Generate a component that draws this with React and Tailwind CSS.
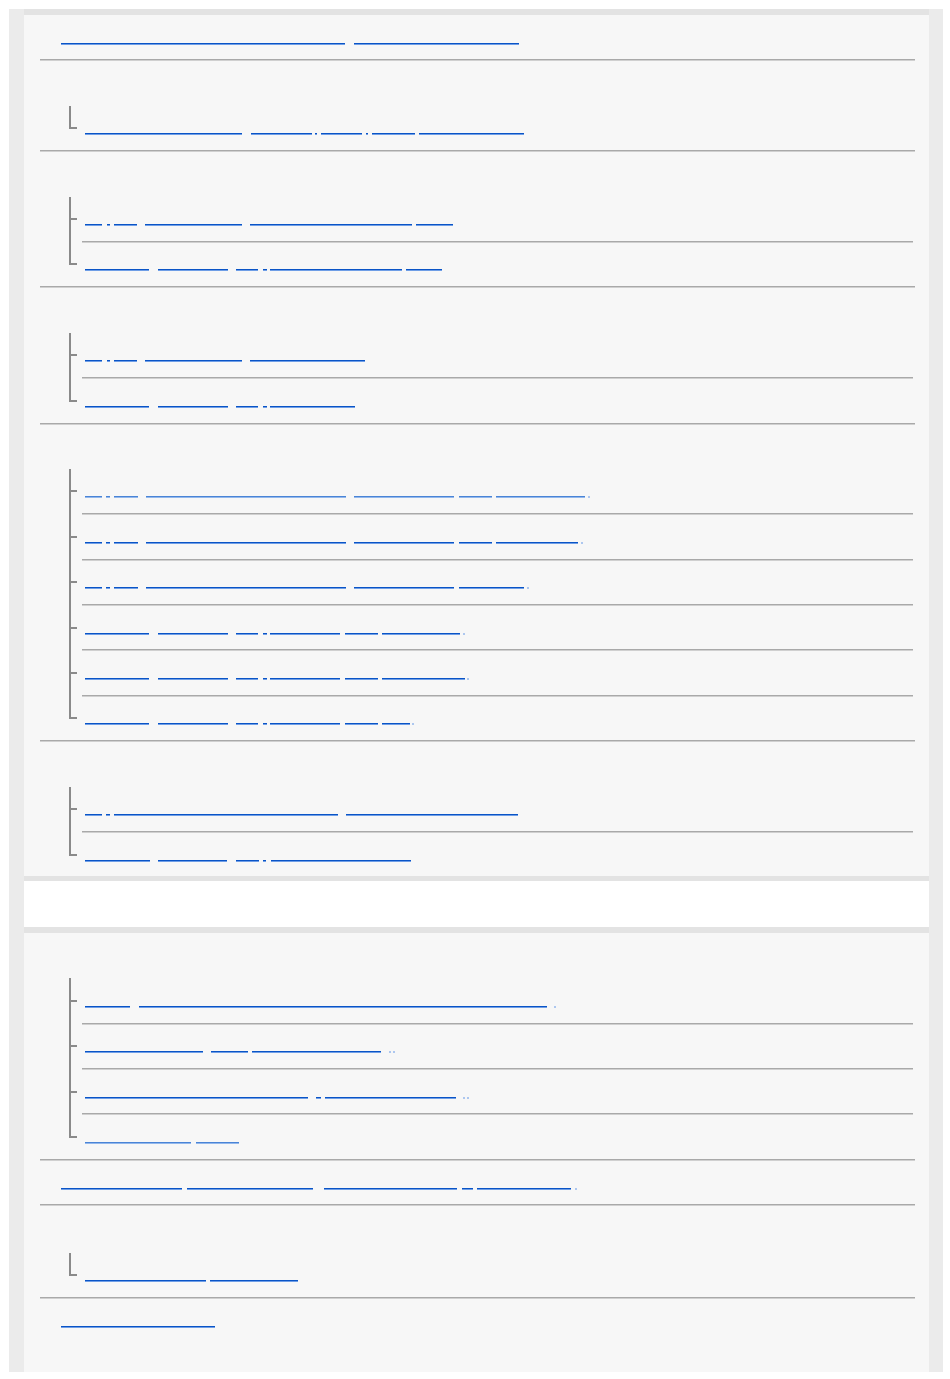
import React from "react";

const NORMAL = "h-[2px] shrink-0 bg-[linear-gradient(#0a54c6_50%,#6f9ee6_50%)]";
const LIGHT = "h-[2px] shrink-0 bg-[linear-gradient(#4a84d6_50%,#93b8ec_50%)]";
const FAINT = "h-[2px] shrink-0 bg-[#adc7ef]";

function Link({ segs, x0, tone }) {
  let prev = x0;
  return (
    <a href="#" className="flex h-[2px]">
      {segs.map(([a, b, f], i) => {
        const ml = a - prev;
        prev = b;
        return (
          <span
            key={i}
            className={f ? FAINT : tone === "light" ? LIGHT : NORMAL}
            style={{ marginLeft: ml, width: b - a }}
          />
        );
      })}
    </a>
  );
}

function TopRow({ segs, last }) {
  return (
    <li
      className={
        last
          ? "h-[45.4px] pl-[21px] pt-[28px]"
          : "h-[45.4px] border-b border-[#a9a9a9] pl-[21px] pt-[28px] shadow-[0_1px_0_#d0d0d0]"
      }
    >
      <Link segs={segs} x0={61} />
    </li>
  );
}

function Item({ segs, last, tone }) {
  return (
    <li className={last ? "relative flex h-[44.4px]" : "relative flex h-[45.4px]"}>
      <span
        className={
          last
            ? "absolute left-0 top-0 h-[23.5px] w-[2px] bg-[#8a8a8a]"
            : "absolute left-0 top-0 h-full w-[2px] bg-[#8a8a8a]"
        }
      />
      <span className="absolute left-0 top-[21.5px] h-[2px] w-[8px] bg-[#8a8a8a]" />
      <div
        className={
          last
            ? "ml-[13px] flex-1 pl-[3px] pt-[27.5px]"
            : "ml-[13px] flex-1 border-b border-[#a9a9a9] pl-[3px] pt-[27.5px] shadow-[0_1px_0_#d0d0d0]"
        }
      >
        <Link segs={segs} x0={85} tone={tone} />
      </div>
    </li>
  );
}

function Group({ items, noBorder, labelH }) {
  return (
    <li className={noBorder ? "" : "border-b border-[#a9a9a9] shadow-[0_1px_0_#d0d0d0]"}>
      <div className={labelH === "tall" ? "h-[47.4px]" : "h-[45.4px]"} />
      <ul className="ml-[29px] mr-[2px]">
        {items.map((it, i) => (
          <Item key={i} segs={it.segs} tone={it.tone} last={i === items.length - 1} />
        ))}
      </ul>
    </li>
  );
}

const top1 = [[61, 345], [354, 519]];
const g1 = [{ segs: [[85, 242], [251, 312], [315, 317], [321, 362], [366, 368], [372, 415], [419, 524]] }];
const g2 = [
  { segs: [[85, 102], [107, 110], [114, 137], [145, 242], [250, 412], [416, 453]] },
  { segs: [[85, 149], [158, 228], [236, 258], [263, 267], [270, 402], [406, 442]] },
];
const g3 = [
  { segs: [[85, 102], [107, 110], [114, 137], [145, 242], [250, 365]] },
  { segs: [[85, 149], [158, 228], [236, 258], [263, 267], [270, 355]] },
];
const g4 = [
  { tone: "light", segs: [[85, 102], [106, 110], [114, 138], [146, 346], [354, 454], [459, 492], [496, 585], [588, 590, 1]] },
  { segs: [[85, 102], [106, 110], [114, 138], [146, 346], [354, 454], [459, 492], [496, 578], [581, 583, 1]] },
  { segs: [[85, 102], [106, 110], [114, 138], [146, 346], [354, 454], [459, 524], [527, 529, 1]] },
  { segs: [[85, 149], [158, 228], [236, 258], [263, 267], [270, 340], [345, 378], [382, 460], [463, 465, 1]] },
  { segs: [[85, 149], [158, 228], [236, 258], [263, 267], [270, 340], [345, 378], [382, 465], [467, 469, 1]] },
  { segs: [[85, 149], [158, 228], [236, 258], [263, 267], [270, 340], [345, 378], [382, 410], [412, 414, 1]] },
];
const g5 = [
  { segs: [[85, 102], [106, 110], [114, 338], [346, 518]] },
  { segs: [[85, 150], [158, 227], [236, 259], [263, 266], [271, 411]] },
];
const g6 = [
  { segs: [[85, 130], [139, 547], [554, 556, 1]] },
  { segs: [[85, 203], [211, 248], [252, 381], [389, 391, 1], [393, 395, 1]] },
  { segs: [[85, 308], [316, 321], [325, 456], [463, 465, 1], [467, 469, 1]] },
  { tone: "light", segs: [[85, 191], [196, 239]] },
];
const top2 = [[61, 182], [187, 313], [324, 457], [462, 473], [477, 571], [575, 577, 1]];
const g7 = [{ segs: [[85, 206], [210, 298]] }];
const top3 = [[61, 215]];

export default function App() {
  return (
    <div className="min-h-[1379px] bg-white pl-[9px] pt-[9px] font-['Liberation_Sans',sans-serif]">
      <div className="w-[934px] bg-[#ebebeb] pl-[15px] pr-[14px]">
        <div className="border-t-[6px] border-b-[5px] border-[#e3e3e3] bg-[#f7f7f7]">
          <ul className="ml-[16px] mr-[14px]">
            <TopRow segs={top1} />
            <Group items={g1} />
            <Group items={g2} />
            <Group items={g3} />
            <Group items={g4} />
            <Group items={g5} noBorder />
          </ul>
        </div>
        <div className="h-[45.5px] bg-white" />
        <div className="border-t-[6px] border-[#e3e3e3] bg-[#f7f7f7] pb-[29px]">
          <ul className="ml-[16px] mr-[14px]">
            <Group items={g6} />
            <TopRow segs={top2} />
            <Group items={g7} labelH="tall" />
            <TopRow segs={top3} last />
          </ul>
        </div>
      </div>
    </div>
  );
}
